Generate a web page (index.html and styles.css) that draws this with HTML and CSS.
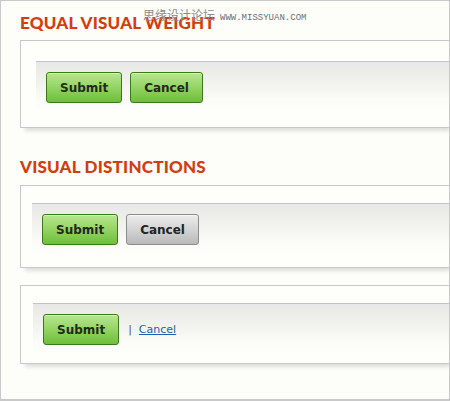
FILE: index.html
```html
<!DOCTYPE html>
<html>
<head>
<meta charset="utf-8">
<link rel="stylesheet" href="styles.css">
</head>
<body>
<div class="frame">
  <div class="watermark"><span class="wm-cn">思缘设计论坛</span><span class="wm-en">WWW.MISSYUAN.COM</span></div>

  <h2 class="title title-first">EQUAL VISUAL WEIGHT</h2>
  <div class="panel panel-one">
    <div class="bar bar-one">
      <button class="btn btn-green">Submit</button>
      <button class="btn btn-green">Cancel</button>
    </div>
  </div>

  <h2 class="title title-second">VISUAL DISTINCTIONS</h2>
  <div class="panel panel-two">
    <div class="bar bar-two">
      <button class="btn btn-green">Submit</button>
      <button class="btn btn-gray">Cancel</button>
    </div>
  </div>

  <div class="panel panel-three">
    <div class="bar bar-three">
      <button class="btn btn-green">Submit</button>
      <span class="pipe">|</span>
      <a class="link" href="#">Cancel</a>
    </div>
  </div>
</div>
</body>
</html>
```

FILE: styles.css
```css
* { box-sizing: border-box; }
html, body { margin: 0; padding: 0; background: #fdfdf9; }

.frame {
  position: relative;
  width: 450px;
  height: 401px;
  border: 1px solid #c9c9c9;
  border-bottom-width: 2px;
  padding-left: 19px;
  background: #fdfdf9;
  display: flex;
  flex-direction: column;
  overflow: hidden;
}

.watermark {
  position: absolute;
  left: 142px;
  top: 7px;
  display: flex;
  align-items: baseline;
  gap: 5px;
  white-space: nowrap;
}
.wm-cn {
  font-family: "Noto Sans CJK SC", sans-serif;
  font-size: 12px;
  line-height: 14px;
  color: #8c8c8c;
}
.wm-en {
  font-family: "Liberation Mono", monospace;
  font-size: 9px;
  color: #6e6e6e;
}

.title {
  margin: 0;
  font-family: Lato, "DejaVu Sans", sans-serif;
  font-weight: 900;
  font-size: 17px;
  line-height: 20px;
  color: #d33c0c;
  letter-spacing: 0.2px;
}
.title-first { margin-top: 12px; margin-bottom: 7px; }
.title-second { margin-top: 29px; margin-bottom: 8px; }

.panel {
  border: 1px solid #c8c8c8;
  border-right: none;
  background: #fefefb;
  box-shadow: 3px 5px 4px -2px rgba(0, 0, 0, 0.13);
}
.panel-one { padding-top: 20px; }
.panel-two { padding-top: 17px; }
.panel-three { padding-top: 17px; margin-top: 17px; }

.bar {
  display: flex;
  align-items: center;
  border-top: 1px solid #c3c3c3;
  padding-top: 10px;
  padding-left: 10px;
  background: linear-gradient(to bottom, #e7e7e5 0px, #efefec 16px, #fbfbf7 38px, #fefefb 50px);
}
.bar-one { margin-left: 15px; padding-bottom: 24px; }
.bar-two { margin-left: 11px; padding-bottom: 22px; }
.bar-three { margin-left: 12px; padding-bottom: 18px; }

.btn {
  height: 31px;
  padding: 0 13px;
  margin: 0 8px 0 0;
  font-family: "DejaVu Sans", Verdana, sans-serif;
  font-weight: bold;
  font-size: 12px;
  color: #1f2a1a;
  border-radius: 3px;
  cursor: pointer;
}
.btn-green {
  border: 1px solid #3b7a1c;
  background: linear-gradient(to bottom, #b6e68f 0%, #9bd86c 40%, #80c94e 75%, #6fbd3e 100%);
  box-shadow: inset 0 1px 0 rgba(255, 255, 255, 0.45);
}
.btn-gray {
  border: 1px solid #8c8c8c;
  color: #222;
  background: linear-gradient(to bottom, #ececec 0%, #d6d6d6 45%, #c4c4c4 80%, #b9b9b9 100%);
  box-shadow: inset 0 1px 0 rgba(255, 255, 255, 0.6);
}

.pipe {
  font-family: "DejaVu Sans", Verdana, sans-serif;
  font-size: 11px;
  color: #555;
  margin-left: 1px;
  margin-right: 7px;
}
.link {
  font-family: "DejaVu Sans", Verdana, sans-serif;
  font-size: 11px;
  color: #1d5fb2;
  text-decoration: underline;
}
```
